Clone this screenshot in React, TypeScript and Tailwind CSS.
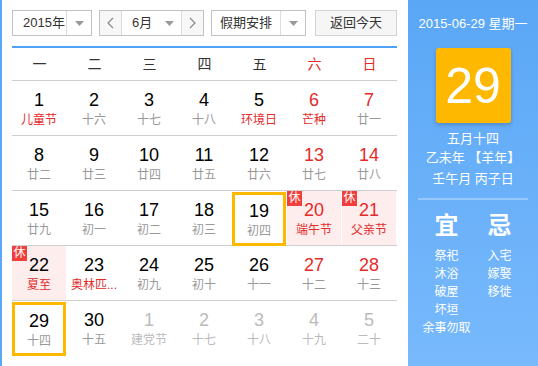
import React from 'react';

type Day = {
    n: number;
    lunar: string;
    red?: boolean;      // number in red (weekend / holiday)
    lunarRed?: boolean; // festival text in red
    rest?: boolean;     // 休 badge + pink bg
    boxed?: boolean;    // orange outline
    other?: boolean;    // next month, greyed
};

const ROWS: Day[][] = [
    [
        { n: 1, lunar: '儿童节', lunarRed: true },
        { n: 2, lunar: '十六' },
        { n: 3, lunar: '十七' },
        { n: 4, lunar: '十八' },
        { n: 5, lunar: '环境日', lunarRed: true },
        { n: 6, lunar: '芒种', red: true, lunarRed: true },
        { n: 7, lunar: '廿一', red: true },
    ],
    [
        { n: 8, lunar: '廿二' },
        { n: 9, lunar: '廿三' },
        { n: 10, lunar: '廿四' },
        { n: 11, lunar: '廿五' },
        { n: 12, lunar: '廿六' },
        { n: 13, lunar: '廿七', red: true },
        { n: 14, lunar: '廿八', red: true },
    ],
    [
        { n: 15, lunar: '廿九' },
        { n: 16, lunar: '初一' },
        { n: 17, lunar: '初二' },
        { n: 18, lunar: '初三' },
        { n: 19, lunar: '初四', boxed: true },
        { n: 20, lunar: '端午节', red: true, lunarRed: true, rest: true },
        { n: 21, lunar: '父亲节', red: true, lunarRed: true, rest: true },
    ],
    [
        { n: 22, lunar: '夏至', lunarRed: true, rest: true },
        { n: 23, lunar: '奥林匹...', lunarRed: true },
        { n: 24, lunar: '初九' },
        { n: 25, lunar: '初十' },
        { n: 26, lunar: '十一' },
        { n: 27, lunar: '十二', red: true },
        { n: 28, lunar: '十三', red: true },
    ],
    [
        { n: 29, lunar: '十四', boxed: true },
        { n: 30, lunar: '十五' },
        { n: 1, lunar: '建党节', other: true },
        { n: 2, lunar: '十七', other: true },
        { n: 3, lunar: '十八', other: true },
        { n: 4, lunar: '十九', other: true },
        { n: 5, lunar: '二十', other: true },
    ],
];

const WEEK = ['一', '二', '三', '四', '五', '六', '日'];

const Caret = () => (
    <svg width="9" height="5" viewBox="0 0 9 5">
        <path d="M0 0h9L4.5 5z" fill="#999" />
    </svg>
);

const Chevron = ({ left }: { left?: boolean }) => (
    <svg width="7" height="12" viewBox="0 0 7 12">
        <path d={left ? 'M6 1L1 6l5 5' : 'M1 1l5 5-5 5'} fill="none" stroke="#888" strokeWidth="1.2" />
    </svg>
);

const Cell = ({ d }: { d: Day }) => {
    const numColor = d.other ? 'text-[#bbb]' : d.red ? 'text-[#e52a2a]' : 'text-black';
    const lunarColor = d.other ? 'text-[#bbb]' : d.lunarRed ? 'text-[#e52a2a]' : 'text-[#999]';
    return (
        <div className="h-[54px] pr-px">
            <div
                className={`relative h-full flex flex-col items-center ${d.rest ? 'bg-[#fdeded]' : ''} ${
                    d.boxed ? 'border-[3px] border-[#ffb800] pt-[6px] mt-px h-[53px]' : 'pt-[9px]'
                }`}
            >
                {d.rest && (
                    <span className="absolute left-0 top-0 w-[15px] h-[15px] bg-[#f23d3d] text-white text-[12px] leading-[15px] text-center">
                        休
                    </span>
                )}
                <span className={`text-[18px] leading-[20px] ${numColor}`}>{d.n}</span>
                <span className={`text-[12px] leading-[20px] whitespace-nowrap ${lunarColor}`}>{d.lunar}</span>
            </div>
        </div>
    );
};

const App: React.FC = () => {
    return (
        <div className="w-[538px] h-[366px] flex bg-white border-l-2 border-[#5aa7f7] overflow-hidden font-['Liberation_Sans','Noto_Sans_CJK_SC',sans-serif]">
            {/* calendar body */}
            <div className="w-[406px] flex-shrink-0 pl-[10px] pr-[11px] pt-[10px]">
                <div className="flex items-center h-[26px] text-[13px] text-[#333]">
                    <div className="w-[80px] h-full flex border border-[#c2c2c2]">
                        <span className="flex-1 flex items-center pl-[10px]">2015年</span>
                        <span className="w-[25px] flex items-center justify-center border-l border-[#ddd]">
                            <Caret />
                        </span>
                    </div>
                    <div className="ml-[7px] w-[105px] h-full flex border border-[#c2c2c2]">
                        <span className="w-[22px] flex items-center justify-center border-r border-[#ddd] bg-[#f7f7f7]">
                            <Chevron left />
                        </span>
                        <span className="flex-1 flex items-center pl-[10px]">
                            <span className="flex-1">6月</span>
                            <span className="pr-[7px] flex items-center"><Caret /></span>
                        </span>
                        <span className="w-[22px] flex items-center justify-center border-l border-[#ddd] bg-[#f7f7f7]">
                            <Chevron />
                        </span>
                    </div>
                    <div className="ml-[7px] w-[95px] h-full flex border border-[#c2c2c2]">
                        <span className="flex-1 flex items-center justify-center">假期安排</span>
                        <span className="w-[25px] flex items-center justify-center border-l border-[#ddd]">
                            <Caret />
                        </span>
                    </div>
                    <div className="ml-[9px] w-[82px] h-full flex items-center justify-center border border-[#d4d4d4] bg-[#f6f6f6]">
                        返回今天
                    </div>
                </div>

                <div className="mt-[10px] h-[2px] bg-[#4fa2f6]" />

                <div className="grid grid-cols-7 h-[33px] items-center text-[14px] text-[#333] text-center border-b border-[#cfcfcf]">
                    {WEEK.map((w, i) => (
                        <span key={w} className={i >= 5 ? 'text-[#e52a2a]' : ''}>{w}</span>
                    ))}
                </div>

                {ROWS.map((row, ri) => (
                    <div key={ri} className={`grid grid-cols-7 ${ri > 0 ? 'border-t border-[#cfcfcf]' : ''}`}>
                        {row.map((d, ci) => (
                            <Cell key={ci} d={d} />
                        ))}
                    </div>
                ))}
            </div>

            {/* side panel */}
            <div className="flex-1 flex flex-col items-center text-white bg-gradient-to-b from-[#5aa7f6] to-[#78b9fc]">
                <div className="mt-[16px] text-[13px] leading-[16px]">2015-06-29 星期一</div>
                <div className="mt-[16px] w-[75px] h-[75px] rounded-[3px] bg-[#ffb800] shadow-[0_2px_4px_rgba(0,0,0,0.2)] flex items-center justify-center text-[50px] leading-none">
                    29
                </div>
                <div className="mt-[6px] text-[13px] leading-[19px] text-center">
                    <div>五月十四</div>
                    <div>乙未年 【羊年】</div>
                    <div className="mt-[2px]">壬午月 丙子日</div>
                </div>
                <div className="mt-[10px] w-[110px] h-[2px] bg-white/30" />
                <div className="mt-[13px] w-full px-[12px] grid grid-cols-2">
                    <div className="flex flex-col items-center">
                        <span className="text-[24px] leading-[26px] font-bold">宜</span>
                        <div className="mt-[8px] flex flex-col items-center text-[12px] leading-[18px]">
                            <span>祭祀</span>
                            <span>沐浴</span>
                            <span>破屋</span>
                            <span>坏垣</span>
                            <span className="whitespace-nowrap">余事勿取</span>
                        </div>
                    </div>
                    <div className="flex flex-col items-center">
                        <span className="text-[24px] leading-[26px] font-bold">忌</span>
                        <div className="mt-[8px] flex flex-col items-center text-[12px] leading-[18px]">
                            <span>入宅</span>
                            <span>嫁娶</span>
                            <span>移徙</span>
                        </div>
                    </div>
                </div>
            </div>
        </div>
    );
};

export default App;
